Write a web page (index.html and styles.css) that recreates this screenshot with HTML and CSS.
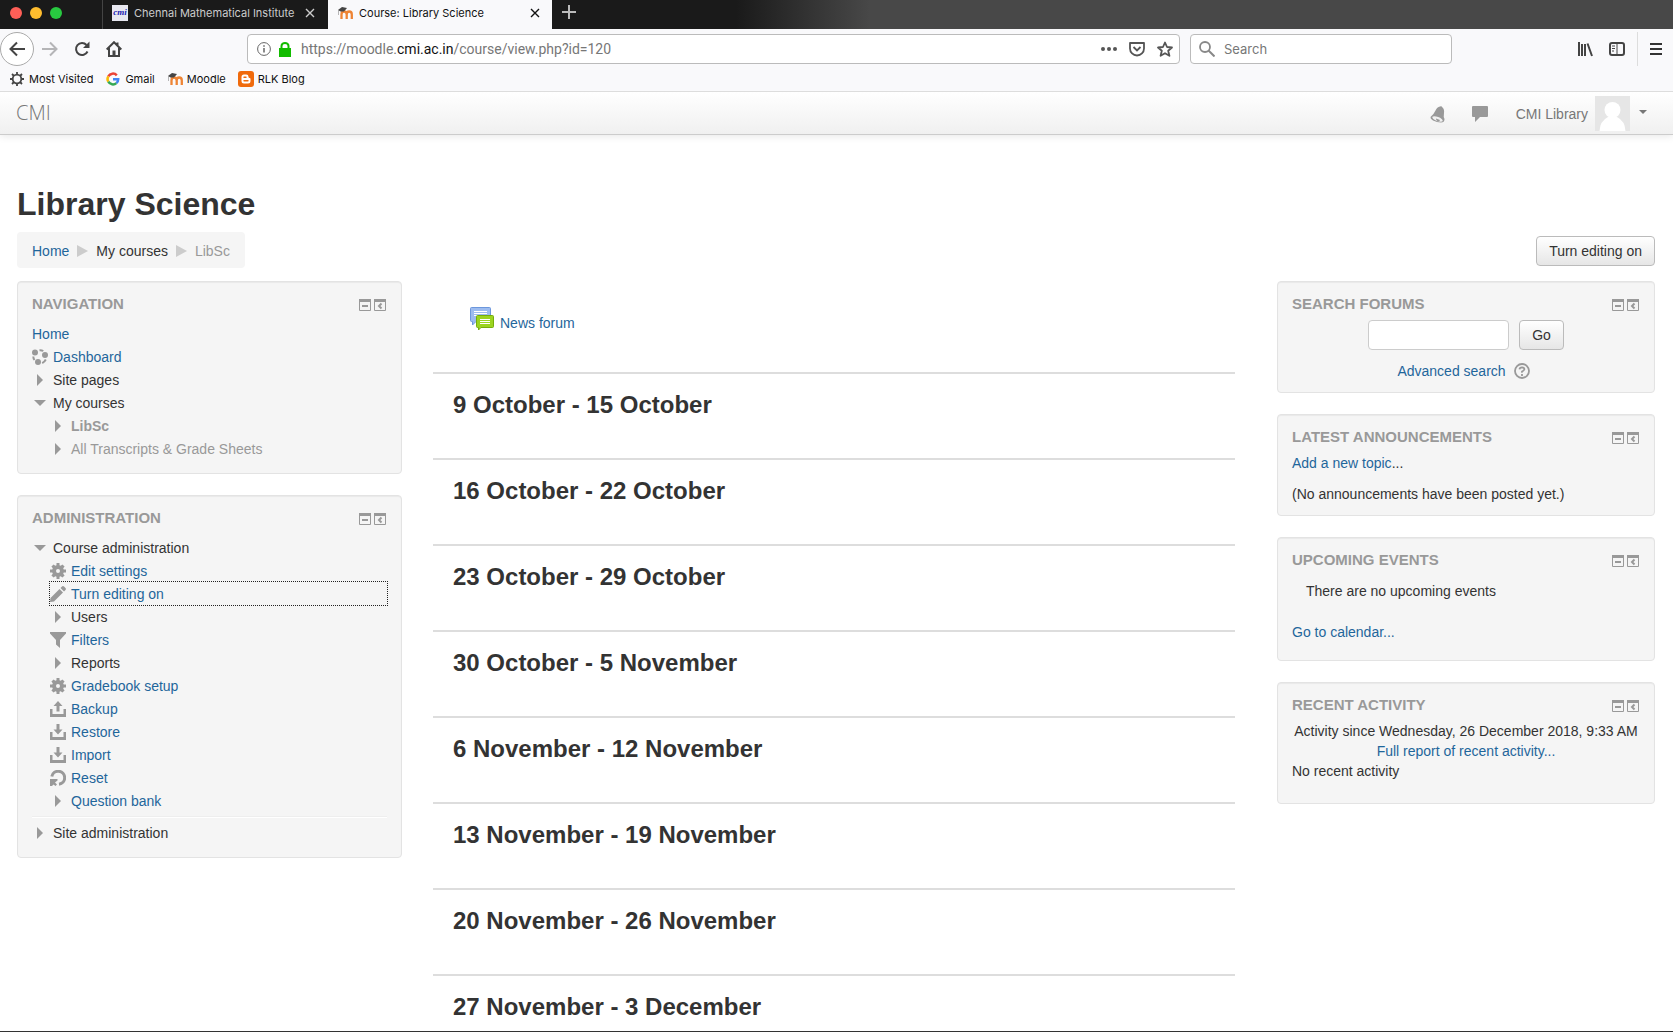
FILE: index.html
```
<!DOCTYPE html>
<html lang="en">
<head>
    <meta charset="UTF-8">
    <meta name="viewport" content="width=device-width, initial-scale=1.0">
    <title>Course: Library Science</title>
    <link rel="stylesheet" href="styles.css">
</head>
<body>
    <!-- shared icons -->
    <svg class="sprite" aria-hidden="true">
        <symbol id="moodle" viewBox="0 0 16 16">
            <path d="M4.500 14V9.500Q4.500 6.500 7 6.500Q9.700 6.500 9.700 9.500V14M9.700 9.500Q9.700 6.500 12.200 6.500Q14.800 6.500 14.800 9.500V14" fill="none" stroke="#ee8434" stroke-width="2.300"/>
            <path d="M1 5L5 2L10 3L7 6.500L3.500 6.500Z" fill="#444"/>
            <path d="M1.500 5V10" stroke="#999" stroke-width=".7"/>
        </symbol>
        <symbol id="close" viewBox="0 0 10 10">
            <path d="M1 1L9 9M9 1L1 9" stroke="currentColor" stroke-width="1.400"/>
        </symbol>
        <symbol id="right" viewBox="0 0 16 16">
            <path d="M5 2L11 8L5 14Z" fill="#999"/>
        </symbol>
        <symbol id="down" viewBox="0 0 16 16">
            <path d="M2 5H14L8 11Z" fill="#999"/>
        </symbol>
        <symbol id="gear" viewBox="0 0 16 16">
            <path fill="#999" fill-rule="evenodd" d="M6.500 0H9.500V2.300L10.700 2.800L12.400 1.400L14.600 3.600L13.200 5.300L13.700 6.500H16V9.500H13.700L13.200 10.700L14.600 12.400L12.400 14.600L10.700 13.200L9.500 13.700V16H6.500V13.700L5.300 13.200L3.600 14.600L1.400 12.400L2.800 10.700L2.300 9.500H0V6.500H2.300L2.800 5.300L1.400 3.600L3.600 1.400L5.300 2.800L6.500 2.300ZM8 6A2 2 0 1 0 8 10A2 2 0 1 0 8 6Z"/>
        </symbol>
        <symbol id="pencil" viewBox="0 0 16 16">
            <path d="M0 16L.500 12L9.500 3L13 6.500L4 15.500Z" fill="#999"/>
            <path d="M10.500 2L12 .500Q13 -.300 14 .600L15.500 2Q16.300 3 15.500 4L14 5.500Z" fill="#999"/>
        </symbol>
        <symbol id="filter" viewBox="0 0 16 16">
            <path d="M0 0H16V1.500L10 8V16L6 12.500V8L0 1.500Z" fill="#999"/>
        </symbol>
        <symbol id="backup" viewBox="0 0 16 16">
            <path d="M0 8H2.500V13H13.500V8H16V16H0Z" fill="#999"/>
            <path d="M8 0L12.500 5H9.500V10.500H6.500V5H3.500Z" fill="#999"/>
        </symbol>
        <symbol id="restore" viewBox="0 0 16 16">
            <path d="M0 8H2.500V13H13.500V8H16V16H0Z" fill="#999"/>
            <path d="M8 10.500L12.500 5.500H9.500V0H6.500V5.500H3.500Z" fill="#999"/>
        </symbol>
        <symbol id="reset" viewBox="0 0 16 16">
            <path d="M1.800 6.500A6.500 6.500 0 1 1 9 14.200" fill="none" stroke="#999" stroke-width="3"/>
            <path d="M0 9H7.500V10.500L5 12.500L7 14.500L5.500 16L3.500 14.500L2 16H0Z" fill="#999"/>
        </symbol>
        <symbol id="dashboard" viewBox="0 0 16 16">
            <circle cx="3" cy="3.500" r="3" fill="#999"/>
            <circle cx="13" cy="6" r="3" fill="#999"/>
            <circle cx="6" cy="13" r="3" fill="#999"/>
            <path d="M7.500 1.200Q9.500 1 11.300 2M1.300 7.500Q1.300 9.500 2.500 11M13.800 10.500Q12.500 13 10.200 14.200" fill="none" stroke="#999" stroke-width="2"/>
        </symbol>
        <symbol id="dock" viewBox="0 0 27 12">
            <path d="M.500 1V11.500H11.500V1M15.500 1V11.500H26.500V1" fill="none" stroke="#999"/>
            <path d="M0 0H12V3H0ZM15 0H27V3H15ZM3 6H9V8H3Z" fill="#999"/>
            <path d="M22.500 4.500L20 7L22.500 9.500" fill="none" stroke="#999" stroke-width="2"/>
        </symbol>
    </svg>

    <header class="browser">
        <div class="tabs">
            <div class="lights">
                <span class="light red"></span>
                <span class="light yellow"></span>
                <span class="light green"></span>
            </div>
            <div class="tab">
                <span class="cmi-icon">cmi</span>
                <span class="tab-title">Chennai Mathematical Institute</span>
                <button class="icon-button" aria-label="Close tab"><svg width="10" height="10"><use href="#close"/></svg></button>
            </div>
            <div class="tab active">
                <svg width="16" height="16"><use href="#moodle"/></svg>
                <span class="tab-title">Course: Library Science</span>
                <button class="icon-button" aria-label="Close tab"><svg width="10" height="10"><use href="#close"/></svg></button>
            </div>
            <button class="icon-button new-tab" aria-label="New tab">
                <svg width="14" height="14" viewBox="0 0 14 14"><path d="M7 0V14M0 7H14" stroke="#bbb" stroke-width="2"/></svg>
            </button>
        </div>

        <div class="toolbar">
            <div class="history">
                <button class="icon-button back" aria-label="Back">
                    <svg width="16" height="16" viewBox="0 0 16 16"><path d="M16 8H1.500M8 1.500L1.500 8L8 14.500" fill="none" stroke="#444" stroke-width="2"/></svg>
                </button>
                <button class="icon-button" aria-label="Forward">
                    <svg width="16" height="16" viewBox="0 0 16 16"><path d="M0 8H14.500M8 1.500L14.500 8L8 14.500" fill="none" stroke="#b5b5b7" stroke-width="2"/></svg>
                </button>
                <button class="icon-button" aria-label="Reload">
                    <svg width="16" height="16" viewBox="0 0 16 16"><path d="M13.500 10.500A6 6 0 1 1 12.500 4" fill="none" stroke="#444" stroke-width="2"/><path d="M15.500 .500V7H9Z" fill="#444"/></svg>
                </button>
                <button class="icon-button" aria-label="Home">
                    <svg width="16" height="16" viewBox="0 0 16 16"><path d="M.700 8.500L8 1.200L15.300 8.500M3 7V15H13V7M11.500 1.500V4" fill="none" stroke="#444" stroke-width="2"/><path d="M6.500 9.500H9.500V15H6.500Z" fill="#444"/></svg>
                </button>
            </div>
            <div class="url-box">
                <svg width="14" height="14" viewBox="0 0 14 14"><circle cx="7" cy="7" r="6.400" fill="none" stroke="#666"/><path d="M7 6V10.500M7 3.200V4.800" stroke="#666" stroke-width="1.500"/></svg>
                <svg width="12" height="15" viewBox="0 0 12 15"><path d="M0 6H12V15H0Z" fill="#12bc00"/><path d="M2.500 7V4A3.500 3 0 0 1 9.500 4V7" fill="none" stroke="#12bc00" stroke-width="2"/></svg>
                <a class="url" href="#">https://moodle.<b>cmi.ac.in</b>/course/view.php?id=120</a>
                <button class="icon-button" aria-label="Page actions">
                    <svg width="16" height="16" viewBox="0 0 16 16"><g fill="#555"><circle cx="2" cy="8" r="2"/><circle cx="8" cy="8" r="2"/><circle cx="14" cy="8" r="2"/></g></svg>
                </button>
                <button class="icon-button" aria-label="Save to Pocket">
                    <svg width="16" height="16" viewBox="0 0 16 16"><path d="M1 2H15V7.500A7 7 0 0 1 1 7.500Z" fill="none" stroke="#555" stroke-width="1.800" stroke-linejoin="round"/><path d="M4.500 6L8 9.500L11.500 6" fill="none" stroke="#555" stroke-width="1.800"/></svg>
                </button>
                <button class="icon-button" aria-label="Bookmark this page">
                    <svg width="16" height="16" viewBox="0 0 16 16"><path d="M8 1.500L10 6L15 6.500L11.200 9.800L12.400 14.800L8 12.200L3.600 14.800L4.800 9.800L1 6.500L6 6Z" fill="none" stroke="#555" stroke-width="1.800" stroke-linejoin="round"/></svg>
                </button>
            </div>
            <div class="search-box">
                <svg width="16" height="16" viewBox="0 0 16 16"><circle cx="6" cy="6" r="5" fill="none" stroke="#888" stroke-width="1.800"/><path d="M9.500 9.500L15.500 15.500" stroke="#888" stroke-width="2"/></svg>
                <input type="text" aria-label="Search the web" placeholder="Search">
            </div>
            <div class="tools">
                <button class="icon-button" aria-label="Library">
                    <svg width="16" height="16" viewBox="0 0 16 16"><path d="M2 1V15M5 3V15M8 3V15M10.500 2.500L15 15" fill="none" stroke="#444" stroke-width="2"/></svg>
                </button>
                <button class="icon-button" aria-label="Sidebars">
                    <svg width="16" height="16" viewBox="0 0 16 16"><rect x="1" y="2" width="14" height="12" rx="2" fill="none" stroke="#444" stroke-width="2"/><path d="M8 2V14M3 5H6M3 7.500H6M3 10H5" stroke="#444"/></svg>
                </button>
                <button class="icon-button menu" aria-label="Menu">
                    <svg width="12" height="12" viewBox="0 0 12 12"><path d="M0 1H12M0 6H12M0 11H12" stroke="#333" stroke-width="2"/></svg>
                </button>
            </div>
        </div>

        <nav class="bookmarks">
            <a href="#">
                <svg width="16" height="16" viewBox="0 0 16 16"><circle cx="8" cy="8" r="4.300" fill="none" stroke="#444" stroke-width="1.800"/><path d="M8 1V4M8 12V15M1 8H4M12 8H15M3 3L5 5M11 11L13 13M13 3L11 5M5 11L3 13" stroke="#444" stroke-width="1.800"/></svg>
                Most Visited
            </a>
            <a href="#">
                <svg width="16" height="16" viewBox="0 0 16 16"><g fill="none" stroke-width="2.500"><path d="M3.300 5.300A5.300 5.300 0 0 1 11.800 4.300" stroke="#ea4335"/><path d="M3.300 5.300A5.300 5.300 0 0 0 3.300 10.700" stroke="#fbbc05"/><path d="M3.300 10.700A5.300 5.300 0 0 0 11.400 12.100" stroke="#34a853"/><path d="M8 8.200H13.200Q13.200 10.600 11.400 12.100" stroke="#4285f4"/></g></svg>
                Gmail
            </a>
            <a href="#">
                <svg width="16" height="16"><use href="#moodle"/></svg>
                Moodle
            </a>
            <a href="#">
                <svg width="16" height="16" viewBox="0 0 16 16"><rect width="16" height="16" rx="3" fill="#f06a0c"/><path d="M6 3.500H8.200A2.300 2.300 0 0 1 10.500 5.800Q10.500 7 11.500 7Q12.500 7 12.500 8V10A2.500 2.500 0 0 1 10 12.500H6A2.500 2.500 0 0 1 3.500 10V6A2.500 2.500 0 0 1 6 3.500Z" fill="#fff"/><path d="M6 6.200H8M6 9.800H10" stroke="#f06a0c" stroke-width="1.400" stroke-linecap="round"/></svg>
                RLK Blog
            </a>
        </nav>
    </header>

    <div class="page">
        <div class="navbar">
            <a class="brand" href="#">CMI</a>
            <div class="usermenu">
                <button class="icon-button" aria-label="Notifications">
                    <svg width="16" height="18" viewBox="0 0 16 18"><path d="M.500 12Q4 9 5.500 5.500Q7 2 10 1.500Q11.500 .500 12.500 2.500Q14.500 4 14 8Q13.300 12 14.500 14Q14.500 17.500 11 17.500Q7 17.500 3 15.500Q0 13.800 .500 12Z" fill="#999"/><ellipse cx="7.500" cy="14" rx="5.500" ry="2" transform="rotate(20 7.500 14)" fill="#f0f0f0"/><path d="M6 13.500L10 15L9 16.500Q6 16 6 13.500Z" fill="#999"/></svg>
                </button>
                <button class="icon-button" aria-label="Messages">
                    <svg width="16" height="16" viewBox="0 0 16 16"><path d="M1 0H15Q16 0 16 1V10Q16 11 15 11H8L3 16V11H1Q0 11 0 10V1Q0 0 1 0Z" fill="#999"/></svg>
                </button>
                <a class="user" href="#">
                    CMI Library
                    <svg width="35" height="35" viewBox="0 0 35 35"><rect width="35" height="35" fill="#e6e6e6"/><circle cx="17.500" cy="14" r="8" fill="#fff"/><path d="M4.500 35Q5 25 13 21H22Q30 25 30.500 35Z" fill="#fff"/></svg>
                    <svg class="caret" width="8" height="10" viewBox="0 0 8 10"><path d="M0 1H8L4 5Z" fill="#777"/></svg>
                </a>
            </div>
        </div>

        <div class="container">
            <h1>Library Science</h1>
            <div class="page-header">
                <nav class="breadcrumb">
                    <a href="#">Home</a>
                    <svg width="11" height="12" viewBox="0 0 11 12"><path d="M0 0L11 6L0 12Z" fill="#ccc"/></svg>
                    <span>My courses</span>
                    <svg width="11" height="12" viewBox="0 0 11 12"><path d="M0 0L11 6L0 12Z" fill="#ccc"/></svg>
                    <span class="dimmed">LibSc</span>
                </nav>
                <button class="btn">Turn editing on</button>
            </div>

            <div class="columns">
                <aside>
                    <section class="block">
                        <div class="block-header">
                            <h2>Navigation</h2>
                            <svg width="27" height="12"><use href="#dock"/></svg>
                        </div>
                        <ul class="tree">
                            <li><a href="#">Home</a></li>
                            <li><svg width="16" height="16"><use href="#dashboard"/></svg><a href="#">Dashboard</a></li>
                            <li><svg width="16" height="16"><use href="#right"/></svg>Site pages</li>
                            <li><svg width="16" height="16"><use href="#down"/></svg>My courses</li>
                            <li class="child dimmed"><svg width="16" height="16"><use href="#right"/></svg><b>LibSc</b></li>
                            <li class="child dimmed"><svg width="16" height="16"><use href="#right"/></svg>All Transcripts &amp; Grade Sheets</li>
                        </ul>
                    </section>
                    <section class="block">
                        <div class="block-header">
                            <h2>Administration</h2>
                            <svg width="27" height="12"><use href="#dock"/></svg>
                        </div>
                        <ul class="tree">
                            <li><svg width="16" height="16"><use href="#down"/></svg>Course administration</li>
                            <li class="child"><svg width="16" height="16"><use href="#gear"/></svg><a href="#">Edit settings</a></li>
                            <li class="child focused"><svg width="16" height="16"><use href="#pencil"/></svg><a href="#">Turn editing on</a></li>
                            <li class="child"><svg width="16" height="16"><use href="#right"/></svg>Users</li>
                            <li class="child"><svg width="16" height="16"><use href="#filter"/></svg><a href="#">Filters</a></li>
                            <li class="child"><svg width="16" height="16"><use href="#right"/></svg>Reports</li>
                            <li class="child"><svg width="16" height="16"><use href="#gear"/></svg><a href="#">Gradebook setup</a></li>
                            <li class="child"><svg width="16" height="16"><use href="#backup"/></svg><a href="#">Backup</a></li>
                            <li class="child"><svg width="16" height="16"><use href="#restore"/></svg><a href="#">Restore</a></li>
                            <li class="child"><svg width="16" height="16"><use href="#restore"/></svg><a href="#">Import</a></li>
                            <li class="child"><svg width="16" height="16"><use href="#reset"/></svg><a href="#">Reset</a></li>
                            <li class="child"><svg width="16" height="16"><use href="#right"/></svg><a href="#">Question bank</a></li>
                        </ul>
                        <hr>
                        <ul class="tree">
                            <li><svg width="16" height="16"><use href="#right"/></svg>Site administration</li>
                        </ul>
                    </section>
                </aside>

                <main>
                    <div class="activity">
                        <svg width="24" height="24" viewBox="0 0 24 24">
                            <path d="M1.500 .500H19.500Q20.500 .500 20.500 1.500V13.500Q20.500 14.500 19.500 14.500H6L2.500 18V14.500H1.500Q.500 14.500 .500 13.500V1.500Q.500 .500 1.500 .500Z" fill="#9dbcf0" stroke="#6c97dc"/>
                            <path d="M4 4.500H17M4 6.500H17M4 8.500H17" stroke="#fff"/>
                            <path d="M7.500 8.500H22.500Q23.500 8.500 23.500 9.500V19.500Q23.500 20.500 22.500 20.500H11L8.500 23V20.500H7.500Q6.500 20.500 6.500 19.500V9.500Q6.500 8.500 7.500 8.500Z" fill="#9bd41f" stroke="#76ad0c"/>
                            <path d="M10 12.500H20M10 14.500H20M10 16.500H20" stroke="#fff"/>
                        </svg>
                        <a href="#">News forum</a>
                    </div>
                    <section class="week"><h3>9 October - 15 October</h3></section>
                    <section class="week"><h3>16 October - 22 October</h3></section>
                    <section class="week"><h3>23 October - 29 October</h3></section>
                    <section class="week"><h3>30 October - 5 November</h3></section>
                    <section class="week"><h3>6 November - 12 November</h3></section>
                    <section class="week"><h3>13 November - 19 November</h3></section>
                    <section class="week"><h3>20 November - 26 November</h3></section>
                    <section class="week"><h3>27 November - 3 December</h3></section>
                </main>

                <aside class="side-post">
                    <section class="block">
                        <div class="block-header">
                            <h2>Search forums</h2>
                            <svg width="27" height="12"><use href="#dock"/></svg>
                        </div>
                        <form class="forum-search">
                            <input type="text" aria-label="Search forums">
                            <button class="btn" type="button">Go</button>
                        </form>
                        <div class="advanced">
                            <a href="#">Advanced search</a>
                            <svg width="16" height="16" viewBox="0 0 16 16"><circle cx="8" cy="8" r="7" fill="none" stroke="#999" stroke-width="1.800"/><path d="M5.500 6.300Q5.700 4.300 8 4.300Q10.400 4.400 10.400 6.300Q10.300 7.500 8 8.600V9.800M8 11V13" fill="none" stroke="#999" stroke-width="1.800"/></svg>
                        </div>
                    </section>
                    <section class="block">
                        <div class="block-header">
                            <h2>Latest announcements</h2>
                            <svg width="27" height="12"><use href="#dock"/></svg>
                        </div>
                        <p class="topic"><a href="#">Add a new topic</a>...</p>
                        <p>(No announcements have been posted yet.)</p>
                    </section>
                    <section class="block">
                        <div class="block-header">
                            <h2>Upcoming events</h2>
                            <svg width="27" height="12"><use href="#dock"/></svg>
                        </div>
                        <p class="no-events">There are no upcoming events</p>
                        <p class="calendar"><a href="#">Go to calendar...</a></p>
                    </section>
                    <section class="block">
                        <div class="block-header">
                            <h2>Recent activity</h2>
                            <svg width="27" height="12"><use href="#dock"/></svg>
                        </div>
                        <p class="center">Activity since Wednesday, 26 December 2018, 9:33 AM</p>
                        <p class="center"><a href="#">Full report of recent activity...</a></p>
                        <p class="no-activity">No recent activity</p>
                    </section>
                </aside>
            </div>
        </div>
    </div>
</body>
</html>
```
FILE: styles.css
```
* {
    box-sizing: border-box;
}

body {
    margin: 0;
    height: 100vh;
    display: flex;
    flex-direction: column;
    overflow: hidden;
    border-bottom: 1px solid #333;
    background-color: #fff;
    color: #333;
    font-family: "Liberation Sans", Arial, sans-serif;
    font-size: 14px;
    line-height: 20px;
}

svg {
    flex: none;
}

a {
    color: #1f669b;
    text-decoration: none;
}

a:hover {
    text-decoration: underline;
}

h1, h2, h3, p, ul {
    margin: 0;
    padding: 0;
}

.sprite {
    position: absolute;
    width: 0;
    height: 0;
}

.icon-button {
    display: flex;
    align-items: center;
    justify-content: center;
    padding: 0;
    border: none;
    background: none;
    color: inherit;
    cursor: pointer;
}

/* browser */
.browser {
    flex: none;
    background-color: #f9f9fb;
    border-bottom: 1px solid #ddd;
    font-family: Inter, sans-serif;
    font-size: 11px;
    color: #111;
}

.tabs {
    display: flex;
    height: 29px;
    background: linear-gradient(to right, #1a1a1a 44%, #484848 52%);
}

.lights {
    display: flex;
    align-items: center;
    gap: 8px;
    width: 102px;
    padding: 0 0 3px 10px;
}

.light {
    width: 12px;
    height: 12px;
    border-radius: 50%;
}

.red {
    background-color: #ff5f57;
}

.yellow {
    background-color: #ffbd2e;
}

.green {
    background-color: #28c940;
}

.tab {
    display: flex;
    align-items: center;
    gap: 6px;
    width: 226px;
    padding: 0 13px 3px 9px;
    border-left: 1px solid #444;
    color: #ccc;
}

.tab.active {
    width: 224px;
    padding-right: 12px;
    border-left: none;
    background-color: #f9f9fb;
    color: #111;
}

.tab-title {
    flex: 1;
    white-space: nowrap;
}

.cmi-icon {
    width: 16px;
    height: 16px;
    background-color: #e8e8f0;
    color: #1a1ab0;
    font: italic bold 9px/14px "Liberation Serif", serif;
    text-align: center;
}

.new-tab {
    width: 34px;
    padding-bottom: 5px;
}

.toolbar {
    display: flex;
    align-items: center;
    height: 40px;
}

.history {
    display: flex;
    align-items: center;
    gap: 16px;
    width: 247px;
}

.history .icon-button {
    width: 16px;
}

.history .back {
    width: 34px;
    height: 34px;
    margin-right: -8px;
    border: 1px solid #aaa;
    border-radius: 50%;
    background-color: #fff;
}

.url-box, .search-box {
    display: flex;
    align-items: center;
    height: 30px;
    border: 1px solid #bbb;
    border-radius: 4px;
    background-color: #fff;
    font-size: 13px;
}

.url-box {
    flex: 1;
    gap: 8px;
    padding: 0 6px 0 9px;
}

.url-box .icon-button {
    margin-left: 4px;
}

.url {
    flex: 1;
    padding-left: 2px;
    color: #777;
    font-family: Roboto, sans-serif;
    font-size: 14px;
}

.url b {
    font-weight: normal;
    color: #111;
}

.search-box {
    width: 262px;
    margin-left: 10px;
    padding: 0 8px;
    gap: 7px;
}

.search-box input {
    flex: 1;
    min-width: 0;
    border: none;
    outline: none;
    font: inherit;
}

.search-box input::placeholder {
    color: #777;
}

.tools {
    display: flex;
    justify-content: flex-end;
    gap: 16px;
    width: 221px;
    padding-right: 11px;
}

.menu {
    height: 34px;
    margin-left: -4px;
    padding-left: 12px;
    border-left: 1px solid #ddd;
}

.tools .icon-button {
    height: 34px;
}

.bookmarks {
    display: flex;
    gap: 12px;
    padding: 0 9px 2px;
}

.bookmarks a {
    display: flex;
    align-items: center;
    gap: 4px;
    color: #111;
}

/* moodle page */
.page {
    flex: 1;
    min-height: 0;
    overflow: hidden;
}

.navbar {
    display: flex;
    align-items: center;
    justify-content: space-between;
    height: 43px;
    padding: 0 26px 0 16px;
    border-bottom: 1px solid #ccc;
    background: linear-gradient(to bottom, #fff, #f0f0f0);
    box-shadow: 0 1px 8px rgba(0, 0, 0, 0.1);
}

.brand {
    color: #777;
    font: 300 20px/20px "Open Sans", sans-serif;
}

.usermenu {
    display: flex;
    align-items: center;
    gap: 26px;
    padding-top: 1px;
    color: #777;
}

.user {
    display: flex;
    align-items: center;
    gap: 7px;
    margin-left: 2px;
    color: #777;
}

.caret {
    margin-left: 2px;
}

.container {
    padding: 49px 18px 0 17px;
}

h1 {
    font-size: 32px;
    line-height: 40px;
}

.page-header {
    display: flex;
    align-items: center;
    justify-content: space-between;
    margin: 8px 0 13px;
}

.breadcrumb {
    display: flex;
    align-items: center;
    gap: 8px;
    padding: 9px 15px 7px;
    border-radius: 4px;
    background-color: #f5f5f5;
}

.dimmed {
    color: #999;
}

.btn {
    height: 30px;
    padding: 0 12px;
    border: 1px solid #bbb;
    border-radius: 4px;
    background: linear-gradient(to bottom, #fff, #e6e6e6);
    color: #333;
    font: inherit;
    cursor: pointer;
}

.page-header .btn {
    margin-top: 2px;
}

.columns {
    display: grid;
    grid-template-columns: 385fr 813fr 378fr;
    gap: 31px;
}

.block {
    margin-bottom: 21px;
    padding: 12px 14px 13px;
    border: 1px solid #e3e3e3;
    border-radius: 4px;
    background-color: #f5f5f5;
    box-shadow: inset 0 1px 1px rgba(0, 0, 0, 0.05);
}

.side-post .block {
    padding-bottom: 11px;
}

.block-header {
    display: flex;
    align-items: center;
    justify-content: space-between;
    height: 20px;
    margin-bottom: 8px;
}

.side-post .block-header {
    margin-bottom: 6px;
}

.block-header h2 {
    color: #999;
    font-size: 15px;
    line-height: 20px;
    text-transform: uppercase;
}

.block-header svg {
    margin: 2px 1px 0 0;
}

.tree {
    list-style: none;
}

.tree li {
    display: flex;
    align-items: center;
    gap: 5px;
    height: 23px;
}

.tree .child {
    margin-left: 18px;
}

.focused {
    outline: 1px dotted #222;
}

hr {
    height: 2px;
    margin: 4px 0 3px;
    border: none;
    border-top: 1px solid #eee;
    border-bottom: 1px solid #fff;
}

main {
    min-width: 0;
    padding-right: 11px;
}

.activity {
    display: flex;
    gap: 6px;
    height: 91px;
    padding: 26px 0 0 37px;
}

.activity a {
    margin-top: 6px;
}

.week {
    height: 86px;
    padding: 11px 20px;
    border-top: 2px solid #ddd;
}

h3 {
    font-size: 24px;
    line-height: 40px;
}

.forum-search {
    display: flex;
    justify-content: center;
    gap: 10px;
}

.forum-search input {
    width: 141px;
    height: 30px;
    border: 1px solid #ccc;
    border-radius: 4px;
    background-color: #fff;
}

.advanced {
    display: flex;
    align-items: center;
    justify-content: center;
    gap: 8px;
    margin-top: 11px;
    padding-right: 5px;
}

.topic {
    margin-bottom: 11px;
}

.no-events {
    padding: 5px 14px 21px;
}

.calendar {
    margin-bottom: 7px;
}

.center {
    text-align: center;
    white-space: nowrap;
}

.no-activity {
    margin-bottom: 11px;
}
```
